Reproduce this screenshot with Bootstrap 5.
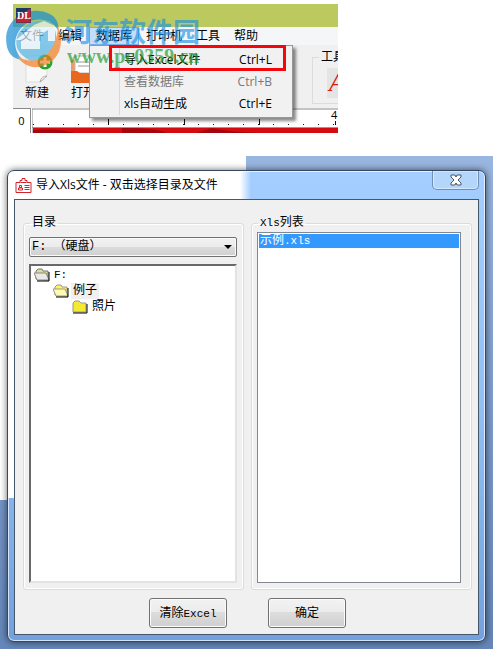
<!DOCTYPE html>
<html lang="zh-CN">
<head>
<meta charset="utf-8">
<meta name="viewport" content="width=device-width, initial-scale=1">
<title>导入Xls文件</title>
<link href="https://cdn.jsdelivr.net/npm/bootstrap@5.3.0/dist/css/bootstrap.min.css" rel="stylesheet">
<style>
body{font-family:"Open Sans","Noto Sans CJK SC",sans-serif;font-size:12px;line-height:18px;color:#000;background:#fff}
button,select{font:inherit;color:inherit}
.mono{font-family:"Liberation Mono","Noto Sans CJK SC",monospace}
.mono small{font-size:11px}
.snippet{width:325px;max-width:100%;margin:4px 0 0 13px;background:#f0f0f0}
.clip{overflow:hidden}
.app-title{height:23px;background:#bbc95f;padding:4px 3px}
.app-title svg{position:relative;z-index:2}
.menubar{height:18px;background:#f5f6f8}
.menubar button{border:0;background:none;padding:0 7px;height:18px}
.menubar button.open{background:#c3defa;outline:1px solid #78aee8;outline-offset:-1px}
.tools{height:63px;padding:8px 0 0 12px;gap:22px}
.tools .tool{border:0;background:none;padding:0;width:24px;white-space:nowrap}
.tool svg{display:block;height:31px;overflow:visible}
.toolgroup{margin:4px 0 0 auto;width:26px;height:47px;border:1px solid #dcdcdc;border-right:0;position:relative}
.toolgroup legend{position:absolute;top:-10px;left:6px;width:auto;background:#f0f0f0;padding:0 2px;font-size:12px;line-height:18px;margin:0;white-space:nowrap}
.toolgroup button{border:0;background:#e4e4e4;padding:0 0 0 2px;margin:10px 0 0 14px;height:30px;width:11px;overflow:hidden;font:italic 26px/30px "Liberation Serif",serif;color:#d8200c}
.ruler{height:25px;background:#fff}
.ruler .origin{width:18px;border:1px solid #888;border-left:0;border-bottom:0;text-align:center;line-height:24px;font-size:11px;margin-right:1px}
.menu-pop{left:76px;top:41px;width:204px;background:#f1f1f1;border:1px solid #979797;box-shadow:3px 3px 3px #0007;padding:3px 0 2px}
.menu-pop button{display:flex;justify-content:space-between;width:100%;border:0;padding:0 20px 0 34px;line-height:22px;background:none}
.menu-pop button:disabled{color:#777}
.menu-pop::before{content:"";position:absolute;left:29px;top:2px;bottom:2px;border-left:1px solid #d8d8d8}
.highlight{left:96px;top:41px;width:177px;height:26px;border:3px solid #f4060d}
.watermark{left:-8px;top:5px;pointer-events:none}
.desktop{margin:23px 5px 0 0;padding:14px 7px 8px 7px;background:linear-gradient(#fff,#fff) 0 0/246px 344px no-repeat,linear-gradient(#99b6e0,#7696c9 65%,#6486b8)}
.dialog-frame{border:1px solid #35485d;border-radius:7px;padding:0 6px 6px;box-shadow:0 0 7px #0009,inset 0 0 0 1px #ffffffb0;background:linear-gradient(90deg,#fff 232px,#fff0 243px) 0 0/100% 327px no-repeat,linear-gradient(#a4ceff,#92c0f5 50%,#72a1de)}
.dialog-title{height:28px;padding-left:1px;gap:4px}
.dialog-title h1{font-size:12px;line-height:18px;margin:0;font-weight:400}
.close-btn{align-self:flex-start;width:47px;height:19px;padding:0;border:1px solid #6f8fb4;border-top:0;border-radius:0 0 5px 5px;background:#b4d6fb;box-shadow:inset 0 0 0 1px #d3e8ff;margin-left:auto}
.client{border:1px solid #47576a;background:#f0f0f0;padding:14px 6px 6px 8px}
.groups{gap:7px}
.groupbox{flex:1 1 0;min-width:0;border:1px solid #d3dee7;border-radius:3px;box-shadow:inset 0 0 0 1px #fff;padding:0 6px 6px 5px;height:376px;display:flex;flex-direction:column}
.groupbox legend{float:none;font-size:12px;line-height:18px;width:auto;margin:0 0 0 1px;padding:0 2px}
.combo{height:20px;width:100%;border:1px solid #707070;border-radius:2px;padding:0 2px;appearance:none;background:url("data:image/svg+xml,%3Csvg xmlns='http://www.w3.org/2000/svg' width='8' height='4'%3E%3Cpath d='M0 0h8L4 4z'/%3E%3C/svg%3E") right 4px center no-repeat,linear-gradient(#f2f2f2,#ebebeb 50%,#dcdcdc 50%,#cfcfcf);box-shadow:inset 0 0 0 1px #fafafa;margin:5px 0 7px}
.tree{flex:1;background:#fff;border:2px solid #696969;border-right-color:#e3e3e3;border-bottom-color:#e3e3e3;margin:0;padding:1px 0 0 3px;list-style:none}
.tree ul{list-style:none;padding-left:19px;margin:0}
.tree button{display:flex;align-items:center;gap:2px;border:0;background:none;padding:0;height:16px}
.tree button span{line-height:16px;padding:0 2px}
.tree .current span{background:#f0f0f0}
.filelist{flex:1;background:#fff;border:1px solid #828790;padding:1px;margin-right:4px}
.filelist button{display:block;width:100%;border:0;background:#3399ff;color:#fff;text-align:left;padding:0 1px;line-height:14px}
.actions{gap:41px;padding-top:8px}
.actions button{width:78px;height:30px;border:1px solid #707070;border-radius:3px;padding:2px 0 0;background:linear-gradient(#f2f2f2,#ebebeb 48%,#dddddd 48%,#cfcfcf);box-shadow:inset 0 0 0 1px #fcfcfc}
</style>
</head>
<body>
<section class="snippet position-relative">
  <div class="clip">
    <div class="app-title">
      <svg class="d-block" width="15" height="15"><rect width="15" height="15" fill="#c32335"/><path d="M0 0h15L0 10z" fill="#193762"/><path d="M0 0h15v15H0z" fill="none" stroke="#263b66"/><text x="1" y="11" font-family="Liberation Serif,serif" font-weight="bold" font-size="10" fill="#fff">DL</text></svg>
    </div>
    <nav class="menubar d-flex"><button>文件</button><button>编辑</button><button class="open">数据库</button><button>打印机</button><button>工具</button><button>帮助</button></nav>
    <div class="tools d-flex align-items-start">
      <button class="tool"><svg width="24" height="31"><path d="M1 3h21v20l-6 6H1z" fill="#f8f8f8" stroke="#ddd"/><path d="M15 29q1-6 7-6z" fill="#fff" stroke="#aaa"/><circle cx="20" cy="9" r="7.500" fill="#24a52b"/><path d="M20 4v10m-5-5h10" stroke="#fff" stroke-width="3"/></svg>新建</button>
      <button class="tool"><svg width="24" height="31"><path d="M0 7h4v20H0z" fill="#ef9b62"/><path d="M4 3h20v17H4z" fill="#fff" stroke="#bbb"/><path d="M7 9h17M7 13h17" stroke="#999"/><path d="M0 18h6l3 2h15v10H0z" fill="#e8681f"/></svg>打开</button>
      <fieldset class="toolgroup"><legend>工具</legend><button>A</button></fieldset>
    </div>
    <div class="ruler d-flex">
      <div class="origin">0</div>
      <svg class="flex-grow-1" height="25" width="306"><path d="M0 25V1H306" fill="none" stroke="#888"/><path d="M1 16.500H306" stroke="#111" stroke-dasharray="1 14"/><path d="M76.500 11v6M152.500 11v6M227.500 11v6M303.500 13v4" stroke="#111"/><path d="M0 19.500h306" stroke="#999"/><path d="M1 20h305v5H1z" fill="#d50b12"/><path d="M1 22q25-2 42 3H1zM90 20q35 0 45 5H90zM180 20q22 5 60 5h-75z" fill="#820408" opacity=".6"/><text x="299" y="11" font-size="11">4</text></svg>
    </div>
  </div>
  <div class="menu-pop position-absolute">
    <button><span>导入Excel文件</span><span>Ctrl+L</span></button>
    <button disabled><span>查看数据库</span><span>Ctrl+B</span></button>
    <button><span>xls自动生成</span><span>Ctrl+E</span></button>
  </div>
  <svg class="watermark position-absolute" width="200" height="64" aria-hidden="true">
    <g opacity=".7"><path d="M2 38C-3 15 15 0 34 2c13 1 21 9 19 19C44 7 24 7 14 22 8 31 9 43 18 51 9 50 4 46 2 38z" fill="#168ed5"/><path d="M13 25Q24 8 44 12q10 8 6 27L31 53q-7-1-10-4-14-9-8-24z" fill="#53b4e4"/><path d="M39 12l11 5v15h-7V21l-8 5v14H16v-9h-5l18-15z" fill="#fff" opacity=".85"/><path d="M53 18c8 19-1 38-20 40-9 1-17-4-21-11 18 12 39 0 41-29z" fill="#f47c20"/></g>
    <text x="60" y="33" font-family="Noto Sans CJK SC,sans-serif" font-weight="bold" font-size="27" fill="#168fe5" opacity=".62">河东软件园</text>
    <text x="62" y="54" font-family="Liberation Serif,serif" font-weight="bold" font-size="20" fill="#239b31" opacity=".68">www.pc0359.cn</text>
  </svg>
  <div class="highlight position-absolute"></div>
</section>

<main class="desktop">
  <section class="dialog-frame">
    <header class="dialog-title d-flex align-items-center">
      <svg width="17" height="16" fill="none" stroke="#d2232a"><path d="M1 5.500h4v-2h2v-2h3v2h2v2h4v10H1z"/><path d="M5.500 5.500h6M9.500 8.500h5M9.500 10.500h5M9.500 12.500h5"/><path d="M3.500 13v-2h4v2zM4.500 8.500h2v2h-2z"/></svg>
      <h1>导入Xls文件 - 双击选择目录及文件</h1>
      <button class="close-btn" aria-label="关闭"><svg class="d-block mx-auto" width="14" height="12"><path d="M2 1h4l1 2 1-2h4v2L9 6l3 3v2H8L7 9l-1 2H2V9l3-3-3-3z" fill="#fff" stroke="#4d5661"/></svg></button>
    </header>
    <div class="client mono">
      <div class="groups d-flex">
        <fieldset class="groupbox">
          <legend>目录</legend>
          <select class="combo" aria-label="驱动器"><option>F: （硬盘）</option></select>
          <ul class="tree">
            <li><button><svg width="16" height="14"><path d="M2 11V3l2-2h4l1 2h5v9z" fill="#dedb92" stroke="#777"/><path d="M0 5h12l3 7H3z" fill="#e8e8e8" stroke="#888"/><path d="M3 13h12V4" fill="none" stroke="#000"/></svg><span><small>F:</small></span></button>
              <ul><li><button class="current"><svg width="16" height="14"><path d="M2 11V3l2-2h4l1 2h5v9z" fill="#fff36b" stroke="#998"/><path d="M0 5h12l3 7H3z" fill="#fffbb5" stroke="#998"/><path d="M3 13h12V4" fill="none" stroke="#000"/></svg><span>例子</span></button>
                <ul><li><button><svg width="16" height="14"><path d="M1 12V3l2-2h4l2 2h5v9z" fill="#f4ea30" stroke="#998"/><path d="M1 13h14V4" fill="none" stroke="#000"/></svg><span>照片</span></button></li></ul>
              </li></ul>
            </li>
          </ul>
        </fieldset>
        <fieldset class="groupbox">
          <legend><small>Xls</small>列表</legend>
          <div class="filelist"><button>示例<small>.xls</small></button></div>
        </fieldset>
      </div>
      <div class="actions d-flex justify-content-center">
        <button>清除<small>Excel</small></button>
        <button>确定</button>
      </div>
    </div>
  </section>
</main>
<script src="https://cdn.jsdelivr.net/npm/bootstrap@5.3.0/dist/js/bootstrap.bundle.min.js"></script>
</body>
</html>
